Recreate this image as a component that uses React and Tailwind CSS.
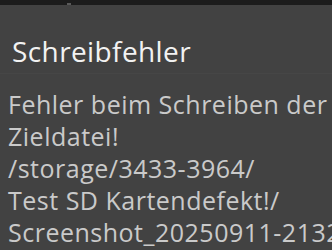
export default function App() {
  const lines = [
    'Fehler beim Schreiben der',
    'Zieldatei!',
    '/storage/3433-3964/',
    'Test SD Kartendefekt!/',
    'Screenshot_20250911-213245.png',
  ]

  return (
    <div className="w-[332px] h-[250px] overflow-hidden bg-[#424242]" style={{ fontFamily: '"Open Sans", sans-serif' }}>
      {/* status bar remnant */}
      <div className="relative h-[5px] bg-[#1c1c1c]">
        <div className="absolute left-[67px] top-[3px] w-[4px] h-[2px] bg-[#5a5a5a]" />
      </div>

      {/* title */}
      <div className="pt-[27px] pb-[3px] pl-[12px] border-b border-[#464646]">
        <div className="text-[28px] leading-[38px] tracking-[0.4px] text-[#f2f2f2]">Schreibfehler</div>
      </div>

      {/* message */}
      <div className="pt-[14px] pl-[8px]">
        {lines.map((t) => (
          <div key={t} className="text-[25px] leading-[32px] tracking-[0.5px] text-[#cacaca] whitespace-nowrap">
            {t}
          </div>
        ))}
      </div>
    </div>
  )
}
